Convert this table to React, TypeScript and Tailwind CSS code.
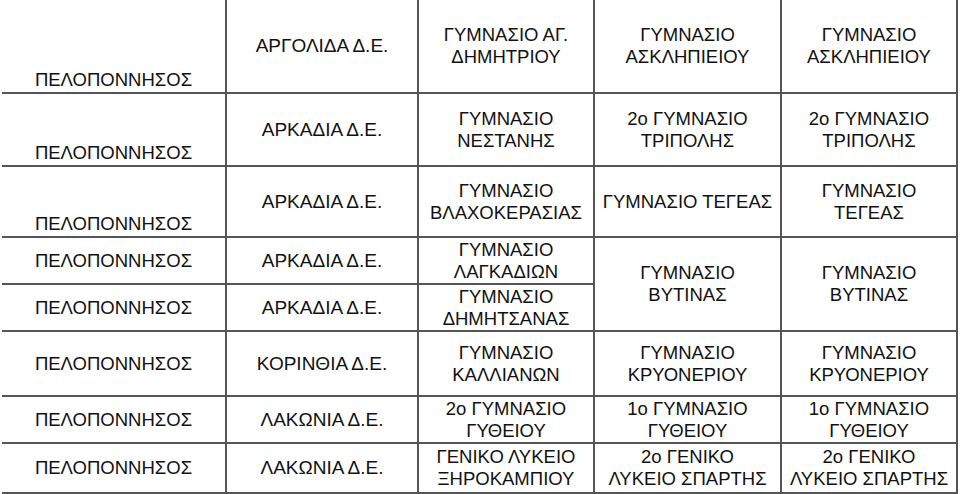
import React from "react"

type Cell = {
  text: React.ReactNode
  rowSpan?: number
  bottom?: boolean
}

const line = "border-r-2 border-b-2 border-[#555555]"

function Td({ text, rowSpan, bottom, h, col }: Cell & { h?: string; col: number }) {
  const size = col === 1 ? "text-[19px]" : "text-[18.5px]"
  return (
    <td
      rowSpan={rowSpan}
      className={`${line} ${h ?? ""} ${size} leading-[22px] text-center px-1 ${
        bottom ? "align-bottom pb-[1px]" : "align-middle"
      }`}
    >
      {text}
    </td>
  )
}

const rows: { h: string; cells: (Cell | null)[] }[] = [
  {
    h: "h-[93px]",
    cells: [
      { text: "ΠΕΛΟΠΟΝΝΗΣΟΣ", bottom: true },
      { text: "ΑΡΓΟΛΙΔΑ Δ.Ε." },
      { text: <>ΓΥΜΝΑΣΙΟ ΑΓ.<br />ΔΗΜΗΤΡΙΟΥ</> },
      { text: <>ΓΥΜΝΑΣΙΟ<br />ΑΣΚΛΗΠΙΕΙΟΥ</> },
      { text: <>ΓΥΜΝΑΣΙΟ<br />ΑΣΚΛΗΠΙΕΙΟΥ</> },
    ],
  },
  {
    h: "h-[73px]",
    cells: [
      { text: "ΠΕΛΟΠΟΝΝΗΣΟΣ", bottom: true },
      { text: "ΑΡΚΑΔΙΑ Δ.Ε." },
      { text: <>ΓΥΜΝΑΣΙΟ<br />ΝΕΣΤΑΝΗΣ</> },
      { text: <>2ο ΓΥΜΝΑΣΙΟ<br />ΤΡΙΠΟΛΗΣ</> },
      { text: <>2ο ΓΥΜΝΑΣΙΟ<br />ΤΡΙΠΟΛΗΣ</> },
    ],
  },
  {
    h: "h-[71px]",
    cells: [
      { text: "ΠΕΛΟΠΟΝΝΗΣΟΣ", bottom: true },
      { text: "ΑΡΚΑΔΙΑ Δ.Ε." },
      { text: <>ΓΥΜΝΑΣΙΟ<br />ΒΛΑΧΟΚΕΡΑΣΙΑΣ</> },
      { text: "ΓΥΜΝΑΣΙΟ ΤΕΓΕΑΣ" },
      { text: <>ΓΥΜΝΑΣΙΟ<br />ΤΕΓΕΑΣ</> },
    ],
  },
  {
    h: "h-[47px]",
    cells: [
      { text: "ΠΕΛΟΠΟΝΝΗΣΟΣ" },
      { text: "ΑΡΚΑΔΙΑ Δ.Ε." },
      { text: <>ΓΥΜΝΑΣΙΟ<br />ΛΑΓΚΑΔΙΩΝ</> },
      { text: <>ΓΥΜΝΑΣΙΟ<br />ΒΥΤΙΝΑΣ</>, rowSpan: 2 },
      { text: <>ΓΥΜΝΑΣΙΟ<br />ΒΥΤΙΝΑΣ</>, rowSpan: 2 },
    ],
  },
  {
    h: "h-[47px]",
    cells: [
      { text: "ΠΕΛΟΠΟΝΝΗΣΟΣ" },
      { text: "ΑΡΚΑΔΙΑ Δ.Ε." },
      { text: <>ΓΥΜΝΑΣΙΟ<br />ΔΗΜΗΤΣΑΝΑΣ</> },
      null,
      null,
    ],
  },
  {
    h: "h-[65px]",
    cells: [
      { text: "ΠΕΛΟΠΟΝΝΗΣΟΣ" },
      { text: "ΚΟΡΙΝΘΙΑ Δ.Ε." },
      { text: <>ΓΥΜΝΑΣΙΟ<br />ΚΑΛΛΙΑΝΩΝ</> },
      { text: <>ΓΥΜΝΑΣΙΟ<br />ΚΡΥΟΝΕΡΙΟΥ</> },
      { text: <>ΓΥΜΝΑΣΙΟ<br />ΚΡΥΟΝΕΡΙΟΥ</> },
    ],
  },
  {
    h: "h-[47px]",
    cells: [
      { text: "ΠΕΛΟΠΟΝΝΗΣΟΣ" },
      { text: "ΛΑΚΩΝΙΑ Δ.Ε." },
      { text: <>2ο ΓΥΜΝΑΣΙΟ<br />ΓΥΘΕΙΟΥ</> },
      { text: <>1ο ΓΥΜΝΑΣΙΟ<br />ΓΥΘΕΙΟΥ</> },
      { text: <>1ο ΓΥΜΝΑΣΙΟ<br />ΓΥΘΕΙΟΥ</> },
    ],
  },
  {
    h: "h-[50px]",
    cells: [
      { text: "ΠΕΛΟΠΟΝΝΗΣΟΣ" },
      { text: "ΛΑΚΩΝΙΑ Δ.Ε." },
      { text: <>ΓΕΝΙΚΟ ΛΥΚΕΙΟ<br />ΞΗΡΟΚΑΜΠΙΟΥ</> },
      { text: <>2ο ΓΕΝΙΚΟ<br />ΛΥΚΕΙΟ ΣΠΑΡΤΗΣ</> },
      { text: <>2ο ΓΕΝΙΚΟ<br />ΛΥΚΕΙΟ ΣΠΑΡΤΗΣ</> },
    ],
  },
]

export default function App() {
  return (
    <div className="w-[960px] h-[494px] bg-white overflow-hidden text-[#111111] font-['Liberation_Sans',Arial,sans-serif]">
      <table className="ml-[2px] table-fixed border-collapse w-[955px]">
        <colgroup>
          <col className="w-[224px]" />
          <col className="w-[192px]" />
          <col className="w-[176px]" />
          <col className="w-[187px]" />
          <col className="w-[176px]" />
        </colgroup>
        <tbody>
          {rows.map((r, i) => (
            <tr key={i}>
              {r.cells.map((c, j) =>
                c ? <Td key={j} {...c} h={r.h} col={j} /> : null
              )}
            </tr>
          ))}
        </tbody>
      </table>
    </div>
  )
}
